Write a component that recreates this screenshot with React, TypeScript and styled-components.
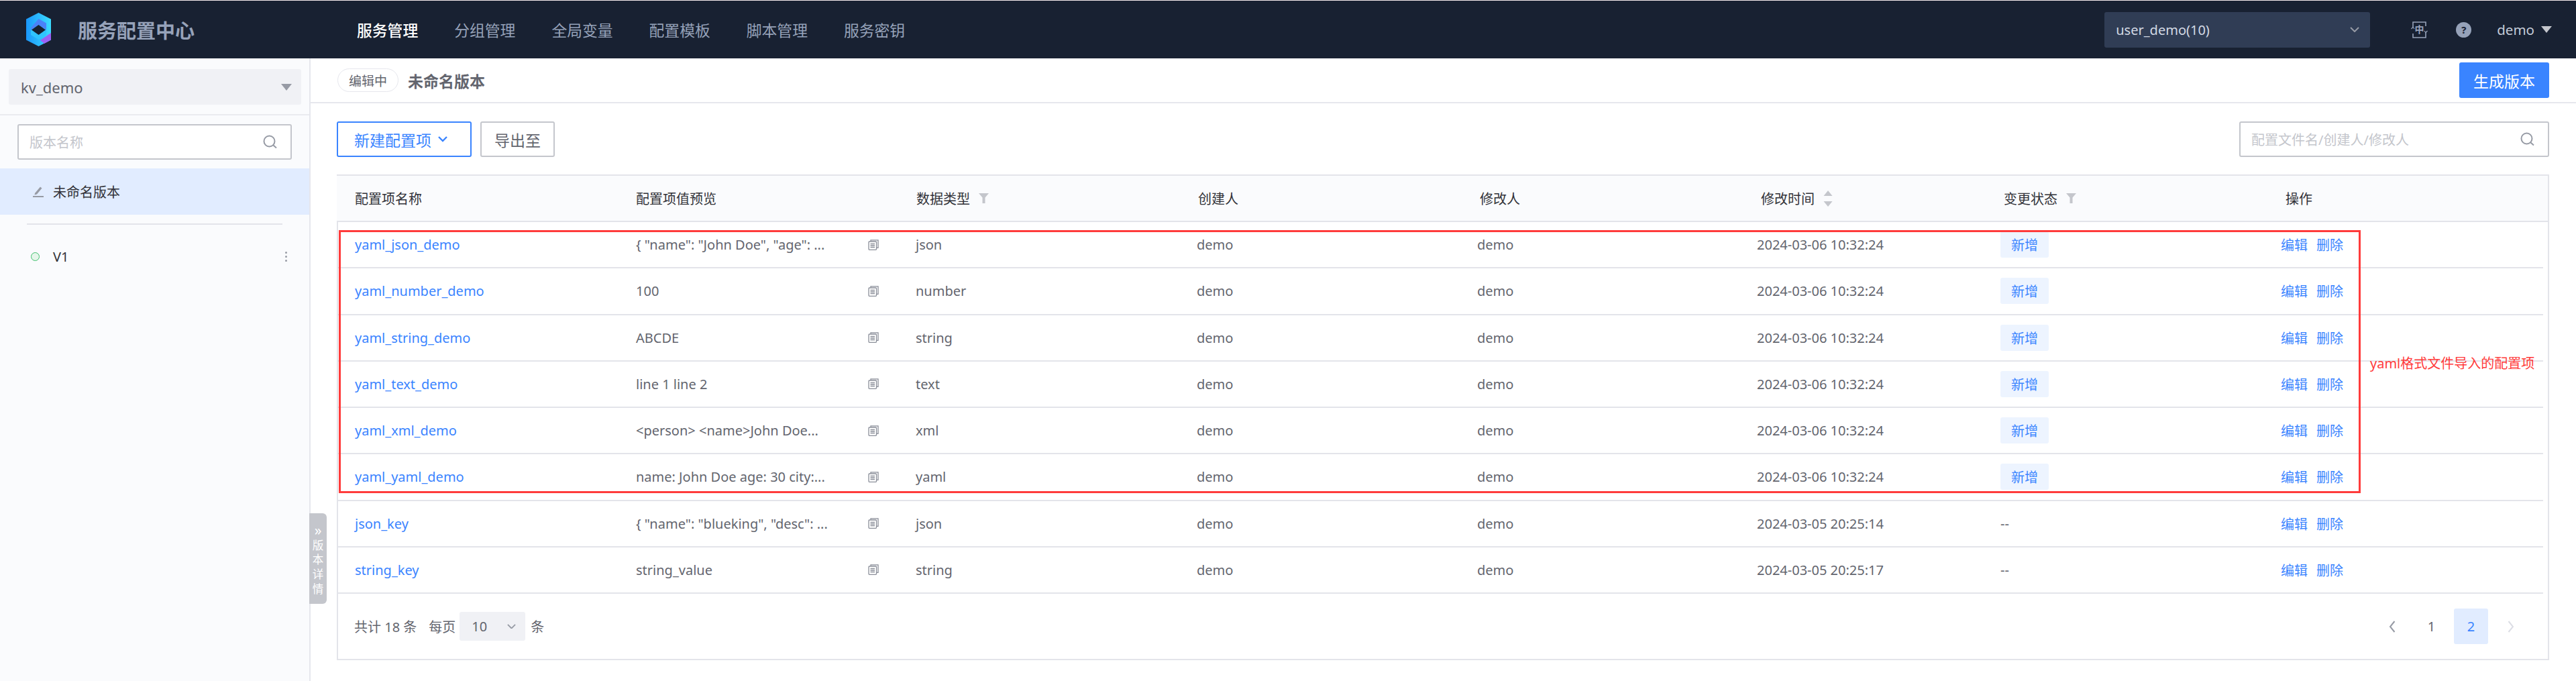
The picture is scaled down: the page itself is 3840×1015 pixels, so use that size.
import React from "react";
import styled, { createGlobalStyle } from "styled-components";

const Global = createGlobalStyle`
  html, body { margin: 0; padding: 0; background: #fff; }
  * { box-sizing: border-box; }
  body { font-family: "Noto Sans", "Noto Sans CJK SC", sans-serif; font-size: 20px; color: #63656e; }
`;

const Page = styled.div`
  position: relative;
  width: 3840px;
  height: 1015px;
  overflow: hidden;
  display: flex;
  flex-direction: column;
  border-top: 1px solid #f6ecee;
`;

const Header = styled.header`
  flex: none;
  height: 86px;
  background: #182132;
  display: flex;
  align-items: center;
  padding-right: 36px;
`;
const Brand = styled.div`
  width: 532px;
  padding-left: 39px;
  display: flex;
  align-items: center;
  gap: 40px;
`;
const BrandTitle = styled.div`
  font-size: 29px;
  font-weight: 700;
  color: #96a2b9;
  white-space: nowrap;
`;
const Nav = styled.nav`
  display: flex;
  gap: 54px;
`;
const NavItem = styled.a<{ $active?: boolean }>`
  font-size: 22.8px;
  color: ${(p) => (p.$active ? "#fff" : "#96a2b9")};
  font-weight: ${(p) => (p.$active ? 500 : 400)};
  white-space: nowrap;
`;
const HeaderRight = styled.div`
  margin-left: auto;
  display: flex;
  align-items: center;
`;
const BizSelect = styled.div`
  width: 396px;
  height: 53px;
  background: #303d55;
  border-radius: 3px;
  display: flex;
  align-items: center;
  justify-content: space-between;
  padding: 0 16px 0 17px;
  color: #d3d9e4;
  font-size: 20px;
  margin-right: 61px;
`;
const HelpDot = styled.div`
  width: 23px;
  height: 23px;
  border-radius: 50%;
  background: #96a2b9;
  color: #182132;
  font-size: 15px;
  font-weight: 700;
  display: flex;
  align-items: center;
  justify-content: center;
  margin: 0 38px 0 42px;
`;
const UserName = styled.span`
  font-size: 20.5px;
  color: #c4cbd8;
  margin-right: 10px;
`;
const Caret = styled.span<{ $color: string }>`
  width: 0;
  height: 0;
  border-left: 8.5px solid transparent;
  border-right: 8.5px solid transparent;
  border-top: 10px solid ${(p) => p.$color};
`;

const Body = styled.div`
  flex: 1;
  display: flex;
  min-height: 0;
`;
const Sidebar = styled.aside`
  position: relative;
  flex: none;
  width: 463px;
  background: #fafbfd;
  border-right: 2px solid #e6e7ed;
`;
const SideTop = styled.div`
  height: 85px;
  padding: 16px 12px 0 13px;
  border-bottom: 2px solid #eaebf0;
`;
const AppSelect = styled.div`
  height: 53px;
  background: #f0f1f5;
  border-radius: 3px;
  display: flex;
  align-items: center;
  justify-content: space-between;
  padding: 0 14px 0 18px;
  font-size: 22px;
  color: #63656e;
`;
const SideSearch = styled.div`
  margin: 13px 26px 13px 26px;
  height: 53px;
  background: #fff;
  border: 2px solid #c4c6cc;
  border-radius: 3px;
  display: flex;
  align-items: center;
  justify-content: space-between;
  padding: 0 20px 0 16px;
  font-size: 20px;
  color: #c4c6cc;
`;
const VersionRow = styled.div<{ $active?: boolean }>`
  height: 69px;
  display: flex;
  align-items: center;
  background: ${(p) => (p.$active ? "#e1ecff" : "transparent")};
  padding-left: ${(p) => (p.$active ? 49 : 46)}px;
  padding-right: 33px;
  color: #313238;
  font-size: 20px;
`;
const VersionIconSlot = styled.span`
  width: 30px;
  display: flex;
  align-items: center;
`;
const VersionDot = styled.span`
  width: 13px;
  height: 13px;
  border-radius: 50%;
  background: #e5f6ea;
  border: 1.5px solid #3fc06d;
  margin-right: 20px;
`;
const More = styled.span`
  margin-left: auto;
  display: flex;
  flex-direction: column;
  gap: 3px;
`;
const MoreDot = styled.i`
  width: 3px;
  height: 3px;
  border-radius: 50%;
  background: #979ba5;
`;
const SideDivider = styled.div`
  height: 2px;
  margin: 13px 40px 13px 40px;
  background: #e3e4ea;
`;
const Handle = styled.div`
  position: absolute;
  top: 678px;
  right: -26px;
  width: 26px;
  height: 135px;
  background: #c4c6cc;
  border-radius: 0 6px 6px 0;
  color: #fff;
  font-size: 16.5px;
  line-height: 21.7px;
  display: flex;
  flex-direction: column;
  align-items: center;
  padding-top: 15px;
`;
const HandleArrow = styled.span`
  font-size: 21px;
  line-height: 21.7px;
`;

const Main = styled.main`
  flex: 1;
  min-width: 0;
  display: flex;
  flex-direction: column;
`;
const TopBar = styled.div`
  flex: none;
  height: 67px;
  border-bottom: 2px solid #e6e7ed;
  display: flex;
  align-items: center;
  padding: 0 40px;
`;
const StatusTag = styled.span`
  height: 35px;
  padding: 0 16px;
  border: 1.5px solid #e6e7ed;
  border-radius: 18px;
  font-size: 19px;
  color: #63656e;
  display: flex;
  align-items: center;
  margin-right: 14px;
`;
const VersionTitle = styled.span`
  font-size: 23px;
  font-weight: 700;
  color: #63656e;
`;
const PrimaryButton = styled.button`
  margin-left: auto;
  width: 134px;
  height: 53px;
  border: none;
  border-radius: 3px;
  background: #3a84ff;
  color: #fff;
  font: inherit;
  font-size: 23px;
`;
const Content = styled.div`
  padding: 27px 40px 0 39px;
`;
const Toolbar = styled.div`
  height: 53px;
  display: flex;
  align-items: stretch;
  gap: 13px;
  margin-bottom: 26px;
`;
const OutlineButton = styled.button<{ $blue?: boolean }>`
  display: flex;
  align-items: center;
  justify-content: ${(p) => (p.$blue ? "flex-start" : "center")};
  gap: 10px;
  width: ${(p) => (p.$blue ? 201 : 111)}px;
  height: 53px;
  padding: 0 0 0 ${(p) => (p.$blue ? 24 : 0)}px;
  background: #fff;
  border: 2px solid ${(p) => (p.$blue ? "#3a84ff" : "#c4c6cc")};
  border-radius: 3px;
  color: ${(p) => (p.$blue ? "#3a84ff" : "#63656e")};
  font: inherit;
  font-size: 23px;
`;
const SearchBox = styled.div`
  margin-left: auto;
  width: 462px;
  border: 2px solid #c4c6cc;
  border-radius: 3px;
  display: flex;
  align-items: center;
  justify-content: space-between;
  padding: 0 20px 0 16px;
  font-size: 20px;
  color: #c4c6cc;
`;

const TableWrap = styled.div`
  border: 2px solid #e3e4ea;
  height: 724px;
`;
const HeadRow = styled.div`
  display: grid;
  grid-template-columns: 419px 418px 420px 420px 419px 362px 420px 1fr;
  height: 69px;
  margin-left: -2px;
  background: #fafbfd;
  border-bottom: 2px solid #e3e4ea;
  align-items: center;
  color: #313238;
`;
const HeadCell = styled.div`
  padding-left: 27px;
  display: flex;
  align-items: center;
  gap: 13px;
  white-space: nowrap;
`;
const BodyRow = styled.div`
  display: grid;
  grid-template-columns: 419px 417px 419px 418px 417px 363px 418px 1fr;
  height: 69.25px;
  width: 3289px;
  margin-left: -2px;
  border-bottom: 2px solid #e3e4ea;
  align-items: center;
`;
const Cell = styled.div`
  padding-left: 27px;
  white-space: nowrap;
`;
const NameLink = styled(Cell)`
  color: #3a84ff;
`;
const PreviewCell = styled(Cell)`
  display: flex;
  align-items: center;
  justify-content: space-between;
  padding-right: 28px;
`;
const Badge = styled.span`
  display: inline-flex;
  align-items: center;
  justify-content: center;
  width: 72px;
  height: 39px;
  background: #edf4ff;
  border-radius: 3px;
  color: #3a84ff;
`;
const Actions = styled(Cell)`
  display: flex;
  gap: 13px;
  color: #3a84ff;
`;
const Footer = styled.div`
  height: 97px;
  display: flex;
  align-items: center;
  justify-content: space-between;
  padding: 0 30px 0 24px;
`;
const FooterLeft = styled.div`
  display: flex;
  align-items: center;
`;
const FooterText = styled.span<{ $gap: number }>`
  margin-right: ${(p) => p.$gap}px;
  white-space: pre;
`;
const PageSize = styled.div`
  width: 98px;
  height: 43px;
  background: #f0f1f5;
  border-radius: 3px;
  display: flex;
  align-items: center;
  justify-content: space-between;
  padding: 0 14px 0 18px;
  margin-right: 8px;
`;
const Pager = styled.div`
  display: flex;
  gap: 8px;
`;
const PageItem = styled.span<{ $active?: boolean }>`
  width: 51px;
  height: 53px;
  display: flex;
  align-items: center;
  justify-content: center;
  border-radius: 3px;
  background: ${(p) => (p.$active ? "#e1ecff" : "transparent")};
  color: ${(p) => (p.$active ? "#3a84ff" : "#63656e")};
  font-size: 20px;
`;

const RedBox = styled.div`
  position: absolute;
  left: 505px;
  top: 342px;
  width: 3014px;
  height: 392px;
  border: 3px solid #ff3b3b;
  pointer-events: none;
`;
const RedNote = styled.div`
  position: absolute;
  left: 3533px;
  top: 526px;
  font-size: 20px;
  line-height: 30px;
  color: #ff3b3b;
  white-space: nowrap;
`;

const Logo = () => (
  <svg width="37" height="50" viewBox="0 0 37 50">
    <defs>
      <linearGradient id="lg1" x1="0" y1="0" x2="1" y2="0">
        <stop offset="0" stopColor="#1a97fb" />
        <stop offset="1" stopColor="#3cdcff" />
      </linearGradient>
    </defs>
    <path d="M18.5 0 37 9.5v31L18.5 50 0 40.5v-31z" fill="url(#lg1)" />
    <path d="M37 30v10.5L27 46l-6-5z" fill="#9a62f5" />
    <path d="M18.5 9 30 15.5v10L18.5 18 7 25.5v-3z" fill="#4a82f8" />
    <path d="M7 25.5V33l11.5 7L30 33v-8z" fill="#2fc4ff" />
    <path d="M18.5 18 29 25.5 18.5 33 8 25.5z" fill="#182132" />
  </svg>
);
const Chevron = ({ size = 14, color = "#979ba5", sw = 2 }: { size?: number; color?: string; sw?: number }) => (
  <svg width={size} height={size * 0.6} viewBox="0 0 14 8.4" fill="none">
    <path d="M1 1l6 6 6-6" stroke={color} strokeWidth={sw} />
  </svg>
);
const SearchIcon = () => (
  <svg width="21" height="21" viewBox="0 0 21 21" fill="none" stroke="#979ba5" strokeWidth="2">
    <circle cx="9.5" cy="9.5" r="8" />
    <path d="M15 15l5 4.5" />
  </svg>
);
const LangIcon = () => (
  <svg width="25" height="25" viewBox="0 0 25 25" fill="none" stroke="#96a2b9" strokeWidth="1.6">
    <path d="M3 9V1h19v6M22 16v8H3v-6" />
    <path d="M0.5 11 3 8.5 5 11M24.5 14 22 16.5 20 14" strokeWidth="1.2" />
    <text x="12.5" y="17" textAnchor="middle" fontSize="14" fontWeight="700" fill="#96a2b9" stroke="none" fontFamily="'Noto Sans CJK SC', sans-serif">中</text>
  </svg>
);
const EditIcon = () => (
  <svg width="17" height="17" viewBox="0 0 17 17">
    <path d="M3 11 11 1.5l2.5 2L6 12.5l-3.5 1z" fill="#979ba5" />
    <rect x="0" y="15" width="16" height="2" fill="#979ba5" />
  </svg>
);
const CopyIcon = () => (
  <svg width="16" height="16" viewBox="0 0 16 16" fill="none" stroke="#8a8e99" strokeWidth="1.3">
    <path d="M4 2.5V.8h11v11.5h-2" />
    <rect x="1" y="3" width="11.5" height="12.3" rx="1" fill="#fff" />
    <path d="M3.5 6.5h6.5M3.5 9h6.5M3.5 11.5h6.5" />
  </svg>
);
const FilterIcon = () => (
  <svg width="15" height="15" viewBox="0 0 15 15">
    <path d="M0 0h15L9.5 6.5V15h-4V6.5z" fill="#c4c6cc" />
  </svg>
);
const SortIcon = () => (
  <svg width="14" height="24" viewBox="0 0 14 24">
    <path d="M7 0l6.5 8H.5z" fill="#c4c6cc" />
    <path d="M7 24l6.5-8H.5z" fill="#c4c6cc" />
  </svg>
);
const PagerArrow = ({ dir, color }: { dir: "l" | "r"; color: string }) => (
  <svg width="10" height="18" viewBox="0 0 10 18" fill="none" stroke={color} strokeWidth="2">
    <path d={dir === "l" ? "M8.5 1 2 9l6.5 8" : "M1.5 1 8 9l-6.5 8"} />
  </svg>
);

const navItems = ["服务管理", "分组管理", "全局变量", "配置模板", "脚本管理", "服务密钥"];
const headers: { t: string; icon?: React.ReactNode }[] = [
  { t: "配置项名称" },
  { t: "配置项值预览" },
  { t: "数据类型", icon: <FilterIcon /> },
  { t: "创建人" },
  { t: "修改人" },
  { t: "修改时间", icon: <SortIcon /> },
  { t: "变更状态", icon: <FilterIcon /> },
  { t: "操作" },
];
const rows = [
  ["yaml_json_demo", '{ "name": "John Doe", "age": ...', "json", "2024-03-06 10:32:24", true],
  ["yaml_number_demo", "100", "number", "2024-03-06 10:32:24", true],
  ["yaml_string_demo", "ABCDE", "string", "2024-03-06 10:32:24", true],
  ["yaml_text_demo", "line 1 line 2", "text", "2024-03-06 10:32:24", true],
  ["yaml_xml_demo", "<person> <name>John Doe...", "xml", "2024-03-06 10:32:24", true],
  ["yaml_yaml_demo", "name: John Doe age: 30 city:...", "yaml", "2024-03-06 10:32:24", true],
  ["json_key", '{ "name": "blueking", "desc": ...', "json", "2024-03-05 20:25:14", false],
  ["string_key", "string_value", "string", "2024-03-05 20:25:17", false],
] as const;

export default function App() {
  return (
    <Page>
      <Global />
      <Header>
        <Brand>
          <Logo />
          <BrandTitle>服务配置中心</BrandTitle>
        </Brand>
        <Nav>
          {navItems.map((n, i) => (
            <NavItem key={n} $active={i === 0}>{n}</NavItem>
          ))}
        </Nav>
        <HeaderRight>
          <BizSelect>
            <span>user_demo(10)</span>
            <Chevron />
          </BizSelect>
          <LangIcon />
          <HelpDot>?</HelpDot>
          <UserName>demo</UserName>
          <Caret $color="#c4c6cc" />
        </HeaderRight>
      </Header>
      <Body>
        <Sidebar>
          <SideTop>
            <AppSelect>
              <span>kv_demo</span>
              <Caret $color="#979ba5" />
            </AppSelect>
          </SideTop>
          <SideSearch>
            <span>版本名称</span>
            <SearchIcon />
          </SideSearch>
          <VersionRow $active>
            <VersionIconSlot><EditIcon /></VersionIconSlot>
            未命名版本
          </VersionRow>
          <SideDivider />
          <VersionRow>
            <VersionDot />
            V1
            <More><MoreDot /><MoreDot /><MoreDot /></More>
          </VersionRow>
          <Handle>
            <HandleArrow>»</HandleArrow>
            <span>版</span>
            <span>本</span>
            <span>详</span>
            <span>情</span>
          </Handle>
        </Sidebar>
        <Main>
          <TopBar>
            <StatusTag>编辑中</StatusTag>
            <VersionTitle>未命名版本</VersionTitle>
            <PrimaryButton>生成版本</PrimaryButton>
          </TopBar>
          <Content>
            <Toolbar>
              <OutlineButton $blue>
                新建配置项
                <Chevron color="#3a84ff" sw={2.4} />
              </OutlineButton>
              <OutlineButton>导出至</OutlineButton>
              <SearchBox>
                <span>配置文件名/创建人/修改人</span>
                <SearchIcon />
              </SearchBox>
            </Toolbar>
            <TableWrap>
              <HeadRow>
                {headers.map((h) => (
                  <HeadCell key={h.t}>
                    {h.t}
                    {h.icon}
                  </HeadCell>
                ))}
              </HeadRow>
              {rows.map((r) => (
                <BodyRow key={r[0]}>
                  <NameLink>{r[0]}</NameLink>
                  <PreviewCell>
                    <span>{r[1]}</span>
                    <CopyIcon />
                  </PreviewCell>
                  <Cell>{r[2]}</Cell>
                  <Cell>demo</Cell>
                  <Cell>demo</Cell>
                  <Cell>{r[3]}</Cell>
                  <Cell>{r[4] ? <Badge>新增</Badge> : "--"}</Cell>
                  <Actions>
                    <span>编辑</span>
                    <span>删除</span>
                  </Actions>
                </BodyRow>
              ))}
              <Footer>
                <FooterLeft>
                  <FooterText $gap={18}>共计 18 条</FooterText>
                  <FooterText $gap={6}>每页</FooterText>
                  <PageSize>
                    <span>10</span>
                    <Chevron size={13} />
                  </PageSize>
                  <span>条</span>
                </FooterLeft>
                <Pager>
                  <PageItem><PagerArrow dir="l" color="#979ba5" /></PageItem>
                  <PageItem>1</PageItem>
                  <PageItem $active>2</PageItem>
                  <PageItem><PagerArrow dir="r" color="#dcdee5" /></PageItem>
                </Pager>
              </Footer>
            </TableWrap>
          </Content>
        </Main>
      </Body>
      <RedBox />
      <RedNote>yaml格式文件导入的配置项</RedNote>
    </Page>
  );
}
